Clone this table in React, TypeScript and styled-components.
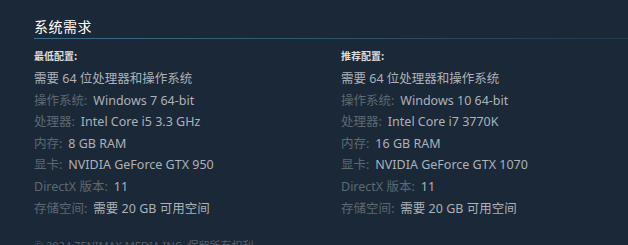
import * as React from "react";
import styled, { createGlobalStyle } from "styled-components";

const GlobalStyle = createGlobalStyle`
  html, body {
    margin: 0;
    padding: 0;
    background: #1b2838;
    overflow: hidden;
  }
  body {
    font-family: "Noto Sans", Arial, "Noto Sans CJK SC", sans-serif;
  }
`;

const Section = styled.div`
  padding: 17px 0 0 34px;
  height: 245px;
  box-sizing: border-box;
`;

const Title = styled.h2`
  margin: 0;
  font-family: "Noto Sans CJK SC", sans-serif;
  font-size: 14px;
  font-weight: 400;
  line-height: 18px;
  color: #ffffff;
  letter-spacing: 0.5px;
  background-image: linear-gradient(to right, #3b6e8f 0%, #2f5a77 40%, #22384d 100%);
  background-repeat: no-repeat;
  background-size: 100% 1px;
  background-position: left bottom;
  padding-bottom: 4px;
`;

const Columns = styled.div`
  display: grid;
  grid-template-columns: 307px 1fr;
  padding-top: 9px;
`;

const Column = styled.div`
  display: flex;
  flex-direction: column;
`;

const Heading = styled.div`
  font-family: "Noto Sans CJK SC", sans-serif;
  font-size: 10px;
  font-weight: 700;
  color: #dcdedf;
  line-height: 16px;
  margin-bottom: 4px;
`;

const Row = styled.div`
  font-family: "Noto Sans", "Noto Sans CJK SC", sans-serif;
  font-size: 12.5px;
  line-height: 21.6px;
  color: #acb2b8;
  white-space: nowrap;
`;

const Label = styled.span`
  color: #5d6872;
  margin-right: 6px;
`;

const Footer = styled.div`
  margin-top: 20px;
  font-family: "Noto Sans", "Noto Sans CJK SC", sans-serif;
  font-size: 11px;
  line-height: 14px;
  color: #56616b;
`;

type Spec = { label?: string; value: string };

const minimum: Spec[] = [
  { value: "需要 64 位处理器和操作系统" },
  { label: "操作系统:", value: "Windows 7 64-bit" },
  { label: "处理器:", value: "Intel Core i5 3.3 GHz" },
  { label: "内存:", value: "8 GB RAM" },
  { label: "显卡:", value: "NVIDIA GeForce GTX 950" },
  { label: "DirectX 版本:", value: "11" },
  { label: "存储空间:", value: "需要 20 GB 可用空间" },
];

const recommended: Spec[] = [
  { value: "需要 64 位处理器和操作系统" },
  { label: "操作系统:", value: "Windows 10 64-bit" },
  { label: "处理器:", value: "Intel Core i7 3770K" },
  { label: "内存:", value: "16 GB RAM" },
  { label: "显卡:", value: "NVIDIA GeForce GTX 1070" },
  { label: "DirectX 版本:", value: "11" },
  { label: "存储空间:", value: "需要 20 GB 可用空间" },
];

const SpecColumn = ({ title, specs }: { title: string; specs: Spec[] }) => (
  <Column>
    <Heading>{title}</Heading>
    {specs.map((s, i) => (
      <Row key={i}>
        {s.label && <Label>{s.label}</Label>}
        {s.value}
      </Row>
    ))}
  </Column>
);

const App = () => (
  <>
    <GlobalStyle />
    <Section>
      <Title>系统需求</Title>
      <Columns>
        <SpecColumn title="最低配置:" specs={minimum} />
        <SpecColumn title="推荐配置:" specs={recommended} />
      </Columns>
      <Footer>© 2024 ZENIMAX MEDIA INC. 保留所有权利。</Footer>
    </Section>
  </>
);

export default App;
